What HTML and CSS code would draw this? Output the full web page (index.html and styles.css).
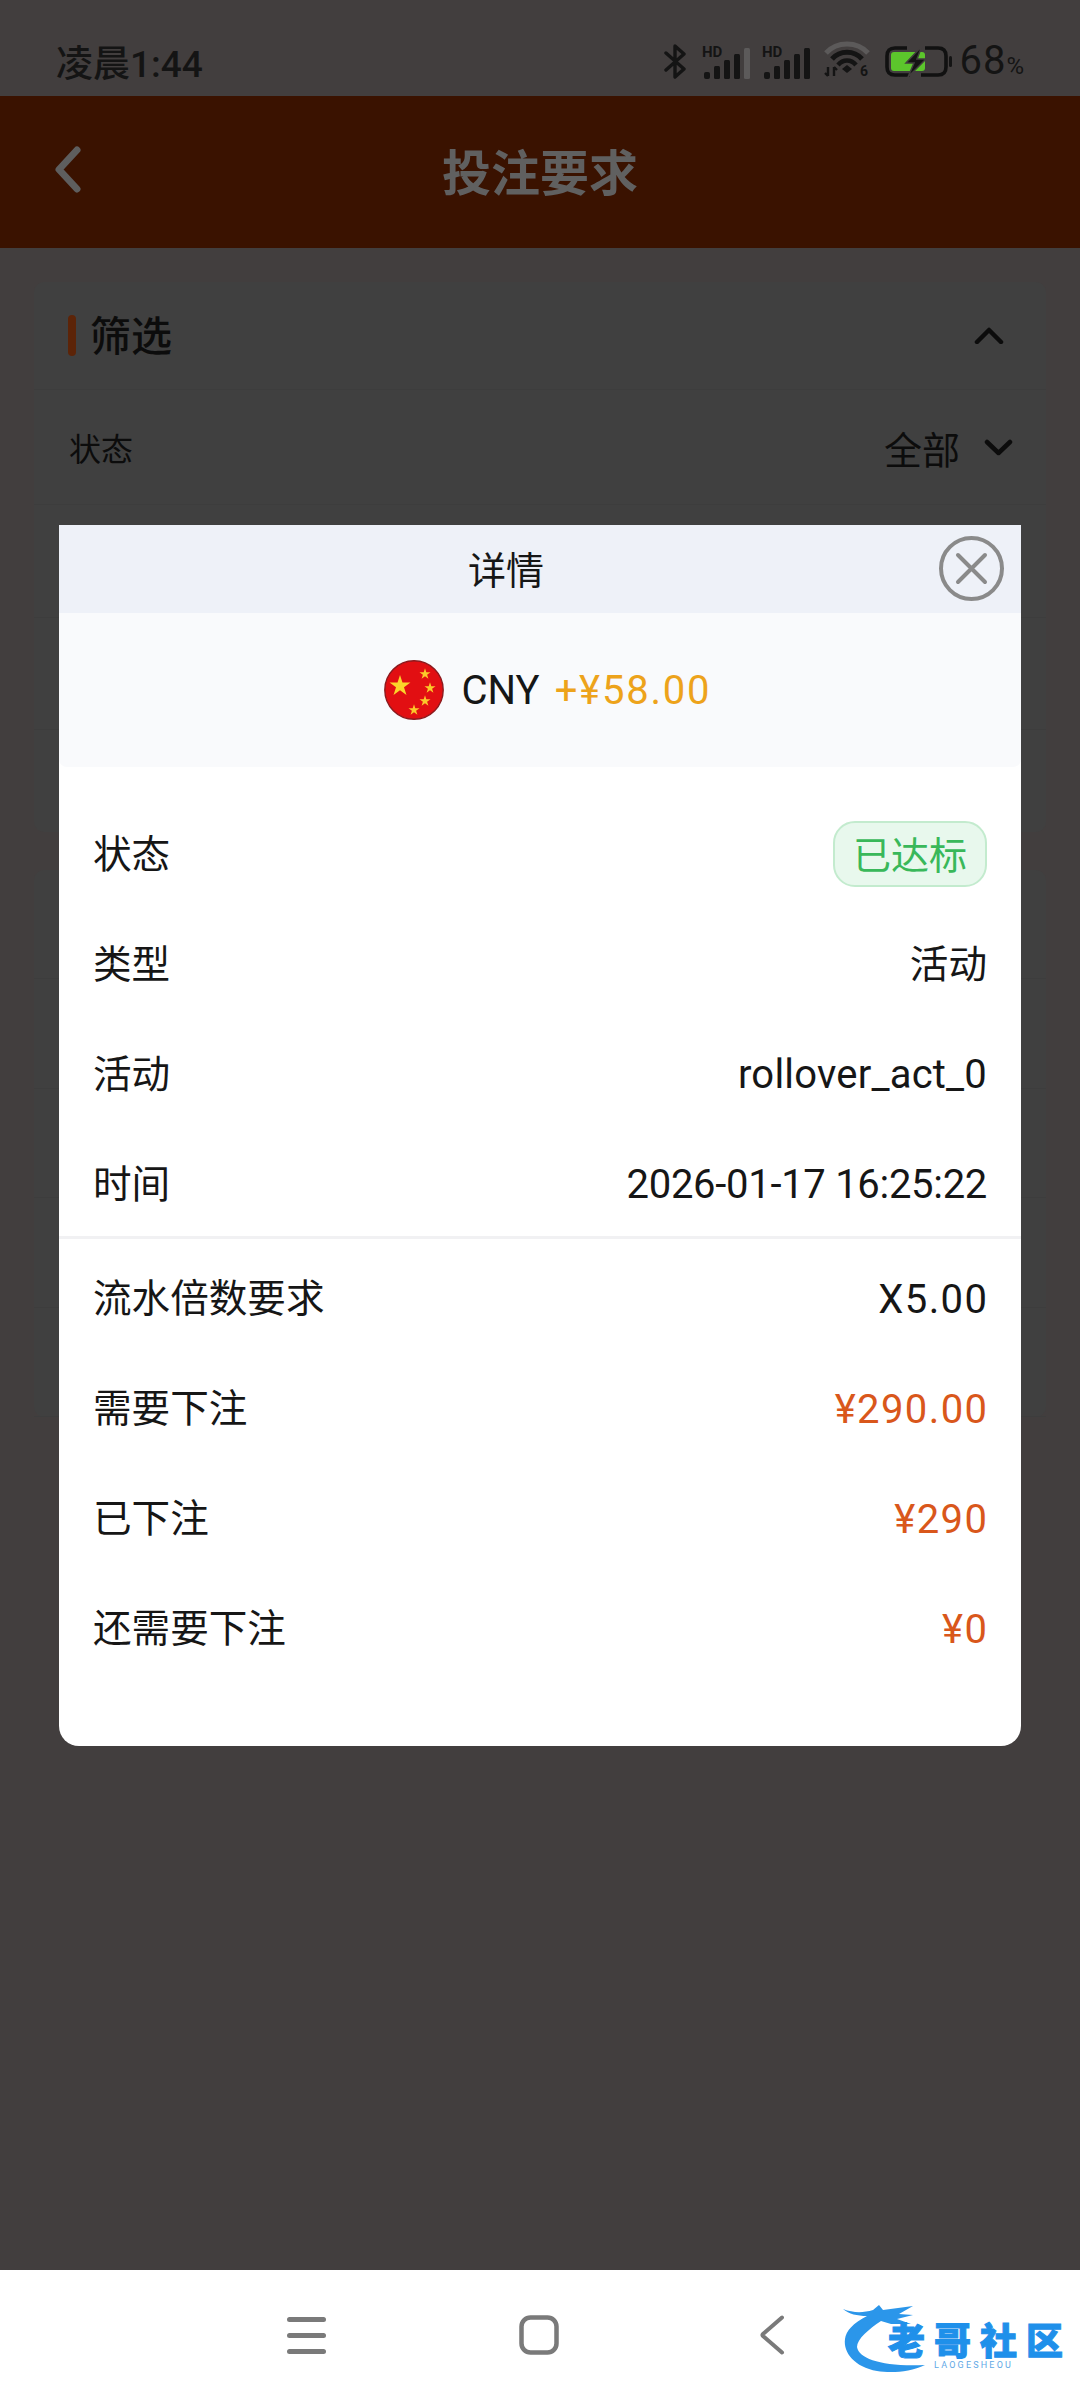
FILE: index.html
```html
<!DOCTYPE html>
<html lang="zh-CN">
<head>
    <meta charset="UTF-8">
    <meta name="viewport" content="width=device-width, initial-scale=1.0">
    <title>投注要求</title>
    <link rel="stylesheet" href="styles.css">
</head>
<body>
    <div class="app">
        <div class="status-bar">
            <span class="status-time">凌晨1:44</span>
            <div class="status-icons">
                <svg class="icon-bt" width="23" height="35" viewBox="0 0 23 35">
                    <path d="M2 9 L20 25 L11 33 V2 L20 10 L2 26" fill="none" stroke="#141414" stroke-width="3.4" stroke-linejoin="round" stroke-linecap="round"/>
                </svg>
                <svg class="icon-signal" width="48" height="38" viewBox="0 -5 48 38">
                    <text x="0" y="10" class="hd-text">HD</text>
                    <rect x="2" y="25" width="6" height="7" rx="2" fill="#141414"/>
                    <rect x="12" y="19" width="6" height="13" rx="1.5" fill="#141414"/>
                    <rect x="22" y="13" width="6" height="19" rx="1.5" fill="#141414"/>
                    <rect x="32" y="7" width="6" height="25" rx="1.5" fill="#141414"/>
                    <rect x="42" y="1" width="6" height="31" rx="1.5" fill="#5c5a5a"/>
                </svg>
                <svg class="icon-signal" width="48" height="38" viewBox="0 -5 48 38">
                    <text x="0" y="10" class="hd-text">HD</text>
                    <rect x="2" y="25" width="6" height="7" rx="2" fill="#141414"/>
                    <rect x="12" y="19" width="6" height="13" rx="1.5" fill="#141414"/>
                    <rect x="22" y="13" width="6" height="19" rx="1.5" fill="#141414"/>
                    <rect x="32" y="7" width="6" height="25" rx="1.5" fill="#141414"/>
                    <rect x="42" y="1" width="6" height="31" rx="1.5" fill="#141414"/>
                </svg>
                <svg class="icon-wifi" width="47" height="40" viewBox="0 0 47 40">
                    <path d="M2 12 C13 0 33 0 44 12" fill="none" stroke="#5c5a5a" stroke-width="5"/>
                    <path d="M8 18 C16 9 30 9 38 18" fill="none" stroke="#141414" stroke-width="5"/>
                    <path d="M14 24 C19 18 27 18 32 24" fill="none" stroke="#141414" stroke-width="4.5"/>
                    <path d="M18 28 L23 24 L28 28 L23 32 Z" fill="#141414"/>
                    <path d="M4 26 V35 M1 32 L4 35 M10 35 V26 M10 26 L13 29" fill="none" stroke="#141414" stroke-width="2.4"/>
                    <text x="36" y="35" class="wifi-six">6</text>
                </svg>
                <svg class="icon-battery" width="68" height="31" viewBox="0 0 68 31">
                    <path d="M22 2 H10 Q2 2 2 10 V21 Q2 29 10 29 H25 M40 2 H53 Q61 2 61 10 V21 Q61 29 53 29 H36" fill="none" stroke="#111" stroke-width="3.6"/>
                    <rect x="6" y="6" width="34" height="19" rx="3" fill="#5cc62c"/>
                    <path d="M37 0 L21 17 H29 L23 31 L41 13 H32 Z" fill="#141414" stroke="#423e3e" stroke-width="1.5"/>
                    <rect x="64" y="10" width="3" height="11" rx="1.5" fill="#141414"/>
                </svg>
                <span class="status-pct">68<small>%</small></span>
            </div>
        </div>

        <header class="top-bar">
            <svg class="back-icon" width="27" height="47" viewBox="0 0 27 47">
                <path d="M23 4 L5 23.5 L23 43" fill="none" stroke="#5e5e5e" stroke-width="7" stroke-linecap="round" stroke-linejoin="round"/>
            </svg>
            <h1>投注要求</h1>
        </header>

        <main class="page">
            <section class="card">
                <div class="filter-head">
                    <span class="accent"></span>
                    <span class="filter-title">筛选</span>
                    <svg class="chevron-up" width="30" height="17" viewBox="0 0 30 17">
                        <path d="M3 15 L15 3 L27 15" fill="none" stroke="#0c0c0c" stroke-width="4.5" stroke-linecap="round" stroke-linejoin="round"/>
                    </svg>
                </div>
                <div class="filter-row row-a">
                    <span class="filter-label">状态</span>
                    <span class="filter-value">全部</span>
                    <svg width="29" height="17" viewBox="0 0 29 17">
                        <path d="M3 3 L14.5 14 L26 3" fill="none" stroke="#0c0c0c" stroke-width="4.5" stroke-linecap="round" stroke-linejoin="round"/>
                    </svg>
                </div>
                <div class="filter-row row-b"></div>
                <div class="filter-row row-c"></div>
                <div class="filter-row row-d"></div>
            </section>
            <section class="card list-card">
                <div class="list-row"></div>
                <div class="list-row"></div>
                <div class="list-row"></div>
                <div class="list-row"></div>
                <div class="list-row"></div>
            </section>
        </main>

        <nav class="nav-bar">
            <svg width="39" height="37" viewBox="0 0 39 37">
                <rect y="0" width="39" height="5" rx="2.5" fill="#7a7a7a"/>
                <rect y="16" width="39" height="5" rx="2.5" fill="#7a7a7a"/>
                <rect y="32" width="39" height="5" rx="2.5" fill="#7a7a7a"/>
            </svg>
            <svg class="nav-home" width="40" height="40" viewBox="0 0 40 40">
                <rect x="2.5" y="2.5" width="35" height="35" rx="9" fill="none" stroke="#7a7a7a" stroke-width="4.5"/>
            </svg>
            <svg class="nav-back" width="25" height="40" viewBox="0 0 25 40">
                <path d="M22 2.5 L3 19 Q2 20 3 21 L22 37.5" fill="none" stroke="#7a7a7a" stroke-width="4" stroke-linecap="round"/>
            </svg>
            <div class="logo">
                <svg class="logo-dragon" width="90" height="70" viewBox="0 0 90 70">
                    <path d="M0 4 C10 8 20 8 30 5 L36 0 L40 5 L70 1 L56 9 L70 10 L54 14 L68 19 L48 19 L38 16 C26 24 14 34 14 42 C16 54 40 62 82 60 C66 68 46 68 34 66 C12 62 0 48 2 34 C3 26 10 18 24 11 C14 11 6 9 0 4 Z" fill="#2b96ea"/>
                </svg>
                <span class="logo-name">老哥社区</span>
                <span class="logo-sub">LAOGESHEOU</span>
            </div>
        </nav>

        <div class="modal">
            <div class="modal-head">
                <span class="modal-title">详情</span>
                <svg class="modal-close" width="65" height="65" viewBox="0 0 65 65">
                    <circle cx="32.5" cy="32.5" r="30.5" fill="none" stroke="#8a8a8a" stroke-width="4"/>
                    <path d="M19 19 L46 46 M46 19 L19 46" fill="none" stroke="#8a8a8a" stroke-width="4" stroke-linecap="round"/>
                </svg>
            </div>
            <div class="summary">
                <svg width="60" height="60" viewBox="0 0 60 60">
                    <defs>
                        <polygon id="star" points="0,-1 .225,-.309 .951,-.309 .363,.118 .588,.809 0,.382 -.588,.809 -.363,.118 -.951,-.309 -.225,-.309"/>
                    </defs>
                    <circle cx="30" cy="30" r="29.2" fill="#e20f12" stroke="#8c1a1e" stroke-width="1.4"/>
                    <use href="#star" fill="#fbd52a" transform="translate(16 26) scale(11)"/>
                    <use href="#star" fill="#fbc92a" transform="translate(41 14) scale(5.8)"/>
                    <use href="#star" fill="#fbc92a" transform="translate(46 28) scale(5.8)"/>
                    <use href="#star" fill="#fbc92a" transform="translate(41 41) scale(5.8)"/>
                    <use href="#star" fill="#fbc92a" transform="translate(30 50) scale(5.8)"/>
                </svg>
                <span class="currency">CNY</span>
                <span class="amount">+¥58.00</span>
            </div>
            <div class="detail-group first-group">
                <div class="detail-row"><span class="label">状态</span><span class="badge">已达标</span></div>
                <div class="detail-row"><span class="label">类型</span><span class="label">活动</span></div>
                <div class="detail-row"><span class="label">活动</span><span class="value">rollover_act_0</span></div>
                <div class="detail-row"><span class="label">时间</span><span class="value date">2026-01-17 16:25:22</span></div>
            </div>
            <div class="detail-group second-group">
                <div class="detail-row"><span class="label">流水倍数要求</span><span class="value num">X5.00</span></div>
                <div class="detail-row"><span class="label">需要下注</span><span class="value num money">¥290.00</span></div>
                <div class="detail-row"><span class="label">已下注</span><span class="value num money">¥290</span></div>
                <div class="detail-row"><span class="label">还需要下注</span><span class="value num money">¥0</span></div>
            </div>
        </div>
    </div>
</body>
</html>
```

FILE: styles.css
```css
* {
    box-sizing: border-box;
}

body {
    margin: 0;
    font-family: Roboto, "Noto Sans CJK SC", sans-serif;
    color: #161616;
    background-color: #423e3e;
}

.app {
    position: relative;
    width: 1080px;
    height: 2400px;
    display: flex;
    flex-direction: column;
    overflow: hidden;
}

/* status bar */
.status-bar {
    height: 96px;
    padding: 26px 56px 0 56px;
    display: flex;
    justify-content: space-between;
    align-items: center;
    color: #141414;
}

.status-time {
    font-size: 37px;
    font-weight: 500;
}

.status-icons {
    display: flex;
    align-items: center;
}

.icon-bt {
    margin-right: 3px;
}

.icon-signal {
    margin-left: 12px;
}

.icon-wifi {
    margin-left: 14px;
}

.icon-battery {
    margin-left: 14px;
}

.hd-text {
    font-size: 15px;
    font-weight: 700;
    fill: #141414;
}

.wifi-six {
    font-size: 14px;
    font-weight: 700;
    fill: #141414;
}

.status-pct {
    margin-left: 6px;
    font-size: 40px;
    line-height: 1;
    letter-spacing: 1px;
}

.status-pct small {
    font-size: 24px;
    letter-spacing: 0;
}

/* top bar */
.top-bar {
    position: relative;
    height: 152px;
    background-color: #3a1200;
    display: flex;
    justify-content: center;
    align-items: center;
    padding-bottom: 6px;
}

.top-bar h1 {
    margin: 0;
    font-size: 49px;
    font-weight: 700;
    color: #606060;
}

.back-icon {
    position: absolute;
    left: 54px;
    top: 50px;
}

/* page behind the dialog */
.page {
    flex: 1;
    padding: 34px 34px 0 34px;
}

.card {
    background-color: #404040;
    border-radius: 10px;
}

.list-card {
    margin-top: 38px;
}

.filter-head {
    height: 108px;
    padding: 0 42px 0 34px;
    display: flex;
    align-items: center;
    border-bottom: 1px solid #3d3d3d;
}

.accent {
    width: 8px;
    height: 41px;
    border-radius: 4px;
    background-color: #5c2408;
}

.filter-title {
    margin-left: 14px;
    margin-bottom: 6px;
    flex: 1;
    font-size: 41px;
    font-weight: 500;
    color: #0c0c0c;
}

.filter-row {
    padding: 0 33px 0 35px;
    display: flex;
    align-items: center;
    border-bottom: 1px solid #3d3d3d;
}

.row-a {
    height: 115px;
}

.row-b {
    height: 113px;
}

.row-c {
    height: 112px;
}

.row-d {
    height: 102px;
    border-bottom: none;
}

.filter-label {
    flex: 1;
    font-size: 32px;
    color: #0c0c0c;
}

.filter-value {
    margin-right: 24px;
    font-size: 38px;
    color: #0c0c0c;
}

.list-row {
    height: 109.4px;
    border-bottom: 1px solid #3d3d3d;
}

/* system navigation */
.nav-bar {
    position: relative;
    height: 130px;
    background-color: #fff;
    flex-shrink: 0;
    display: flex;
    align-items: center;
    padding-left: 287px;
}

.nav-home {
    margin-left: 193px;
}

.nav-back {
    margin-left: 201px;
}

.logo {
    position: absolute;
    left: 843px;
    top: 35px;
    width: 225px;
    height: 70px;
}

.logo-dragon {
    position: absolute;
    left: 0;
    top: 0;
}

.logo-name {
    position: absolute;
    left: 45px;
    top: 21px;
    font-size: 37px;
    line-height: 34px;
    font-weight: 900;
    letter-spacing: 9px;
    white-space: nowrap;
    color: #1f90ea;
    -webkit-text-stroke: 1px #1f90ea;
}

.logo-sub {
    position: absolute;
    left: 91px;
    top: 55px;
    font-size: 9px;
    line-height: 10px;
    letter-spacing: 2.2px;
    color: #5fa9e6;
}

/* dialog */
.modal {
    position: absolute;
    left: 59px;
    top: 525px;
    width: 962px;
    height: 1221px;
    background-color: #fff;
    border-radius: 0 0 20px 20px;
}

.modal-head {
    position: relative;
    height: 88px;
    background-color: #eef1f8;
    display: flex;
    justify-content: center;
    align-items: center;
    padding: 0 68px 3px 0;
}

.modal-title {
    font-size: 38px;
}

.modal-close {
    position: absolute;
    left: 880px;
    top: 11px;
}

.summary {
    height: 154px;
    background-color: #f9fafc;
    border-radius: 0 0 8px 8px;
    display: flex;
    justify-content: center;
    align-items: center;
    font-size: 40px;
    padding-left: 15px;
}

.currency {
    margin-left: 18px;
}

.amount {
    margin-left: 15px;
    color: #eda31b;
    letter-spacing: 1.8px;
}

.detail-group {
    padding: 0 34px;
}

.first-group {
    height: 440px;
    margin-top: 32px;
    margin-bottom: 5px;
    border-bottom: 3px solid #f1f1f3;
}

.detail-row {
    height: 110px;
    display: flex;
    justify-content: space-between;
    align-items: center;
}

.label {
    font-size: 38.6px;
    margin-bottom: 6px;
}

.second-group .label {
    margin-bottom: 9px;
}

.value {
    font-size: 40px;
    letter-spacing: .2px;
}

.date {
    letter-spacing: -.3px;
}

.num {
    letter-spacing: 1.4px;
    margin-right: -1.4px;
}

.badge {
    width: 154px;
    height: 66px;
    border: 2px solid #c3ebce;
    border-radius: 22px;
    background-color: #e8f8ed;
    color: #39b85a;
    font-size: 38px;
    padding-bottom: 4px;
    display: flex;
    justify-content: center;
    align-items: center;
}

.money {
    color: #d9571b;
}
```
